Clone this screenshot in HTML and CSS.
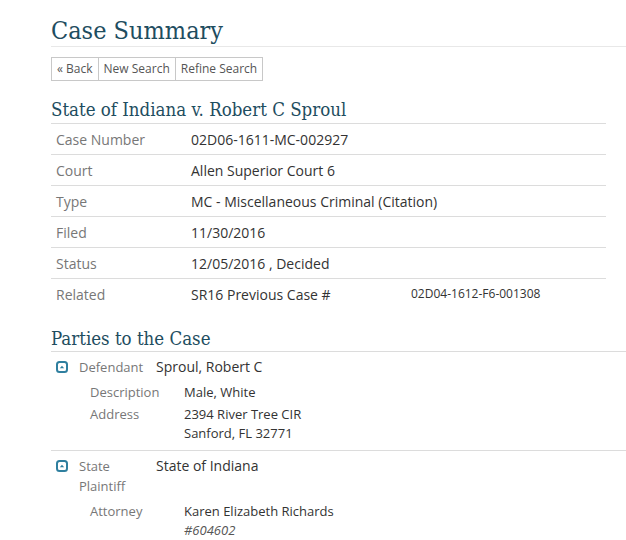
FILE: index.html
```html
<!DOCTYPE html>
<html lang="en">
<head>
  <meta charset="UTF-8" />
  <title>Case Summary</title>
  <link rel="stylesheet" href="styles.css">
</head>
<body>
  <div class="page">
    <h1>Case Summary</h1>

    <div class="btn-group">
      <a class="btn" href="#">&laquo; Back</a>
      <a class="btn" href="#">New Search</a>
      <a class="btn" href="#">Refine Search</a>
    </div>

    <h2 class="case-title">State of Indiana v. Robert C Sproul</h2>
    <table class="summary">
      <tr><td class="lbl">Case Number</td><td>02D06-1611-MC-002927</td></tr>
      <tr><td class="lbl">Court</td><td>Allen Superior Court 6</td></tr>
      <tr><td class="lbl">Type</td><td>MC - Miscellaneous Criminal (Citation)</td></tr>
      <tr><td class="lbl">Filed</td><td>11/30/2016</td></tr>
      <tr><td class="lbl">Status</td><td>12/05/2016 , Decided</td></tr>
      <tr class="last">
        <td class="lbl">Related</td>
        <td><div class="related"><span class="rel-type">SR16 Previous Case #</span><span class="rel-num">02D04-1612-F6-001308</span></div></td>
      </tr>
    </table>

    <h2 class="section">Parties to the Case</h2>

    <div class="party">
      <div class="party-head">
        <span class="toggle"><svg width="12" height="12" viewBox="0 0 12 12"><rect x="1" y="1" width="10" height="10" rx="2.5" fill="none" stroke="#2f7f9f" stroke-width="2"/><path d="M3.8 7.2 L6 4.8 L8.2 7.2 Z" fill="#2f7f9f"/></svg></span>
        <span class="role">Defendant</span>
        <span class="name">Sproul, Robert C</span>
      </div>
      <dl class="details">
        <dt>Description</dt><dd>Male, White</dd>
        <dt>Address</dt><dd>2394 River Tree CIR<br>Sanford, FL 32771</dd>
      </dl>
    </div>

    <div class="party">
      <div class="party-head">
        <span class="toggle"><svg width="12" height="12" viewBox="0 0 12 12"><rect x="1" y="1" width="10" height="10" rx="2.5" fill="none" stroke="#2f7f9f" stroke-width="2"/><path d="M3.8 7.2 L6 4.8 L8.2 7.2 Z" fill="#2f7f9f"/></svg></span>
        <span class="role">State<br>Plaintiff</span>
        <span class="name">State of Indiana</span>
      </div>
      <dl class="details">
        <dt>Attorney</dt><dd>Karen Elizabeth Richards<br><em>#604602</em></dd>
      </dl>
    </div>
  </div>
</body>
</html>
```

FILE: styles.css
```css
body {
  margin: 0;
  font-family: "Open Sans", Arial, sans-serif;
  color: #333;
  background: #fff;
}

.page {
  padding: 16px 0 0 51px;
}

h1 {
  font-family: "DejaVu Serif Condensed", "DejaVu Serif", Georgia, serif;
  font-weight: normal;
  font-size: 25px;
  line-height: 30px;
  color: #1e4d60;
  margin: 0;
  border-bottom: 1px solid #e8e8e8;
}

.btn-group {
  display: inline-flex;
  margin-top: 10px;
  border: 1px solid #c8c8c8;
}

.btn {
  font-size: 12px;
  color: #555;
  text-decoration: none;
  padding: 3px 5px 4px;
  line-height: 15px;
  border-left: 1px solid #c8c8c8;
}

.btn:first-child {
  border-left: none;
}

h2 {
  font-family: "DejaVu Serif Condensed", "DejaVu Serif", Georgia, serif;
  font-weight: normal;
  font-size: 18.5px;
  color: #1e4d60;
  margin: 0;
  line-height: 22px;
}

.case-title {
  margin-top: 18px;
  width: 555px;
  padding-bottom: 2px;
  border-bottom: 1px solid #dcdcdc;
}

.summary {
  width: 555px;
  border-collapse: collapse;
  font-size: 14px;
}

.summary td {
  height: 30px;
  padding: 0;
  border-bottom: 1px solid #dcdcdc;
  vertical-align: middle;
}

.summary tr.last td {
  border-bottom: none;
}

.summary .lbl {
  width: 135px;
  padding-left: 5px;
  color: #777;
}

.related {
  display: flex;
}

.rel-type {
  width: 220px;
}

.rel-num {
  font-size: 12px;
}

.section {
  margin-top: 19px;
  padding-bottom: 1px;
  border-bottom: 1px solid #dcdcdc;
}

.party {
  padding: 5px 0 7px 5px;
  border-bottom: 1px solid #dcdcdc;
}

.party:last-child {
  border-bottom: none;
}

.party-head {
  display: flex;
  align-items: flex-start;
  font-size: 13px;
  line-height: 20px;
}

.toggle {
  width: 23px;
  padding-top: 4px;
  line-height: 0;
}

.role {
  width: 77px;
  color: #777;
}

.name {
  font-size: 14px;
  color: #333;
}

.details {
  display: grid;
  grid-template-columns: 94px auto;
  margin: 6px 0 0 34px;
  font-size: 13px;
  line-height: 19px;
  row-gap: 3px;
}

.details dt {
  color: #777;
}

.details dd {
  margin: 0;
  color: #333;
}

.details em {
  color: #555;
}
```
